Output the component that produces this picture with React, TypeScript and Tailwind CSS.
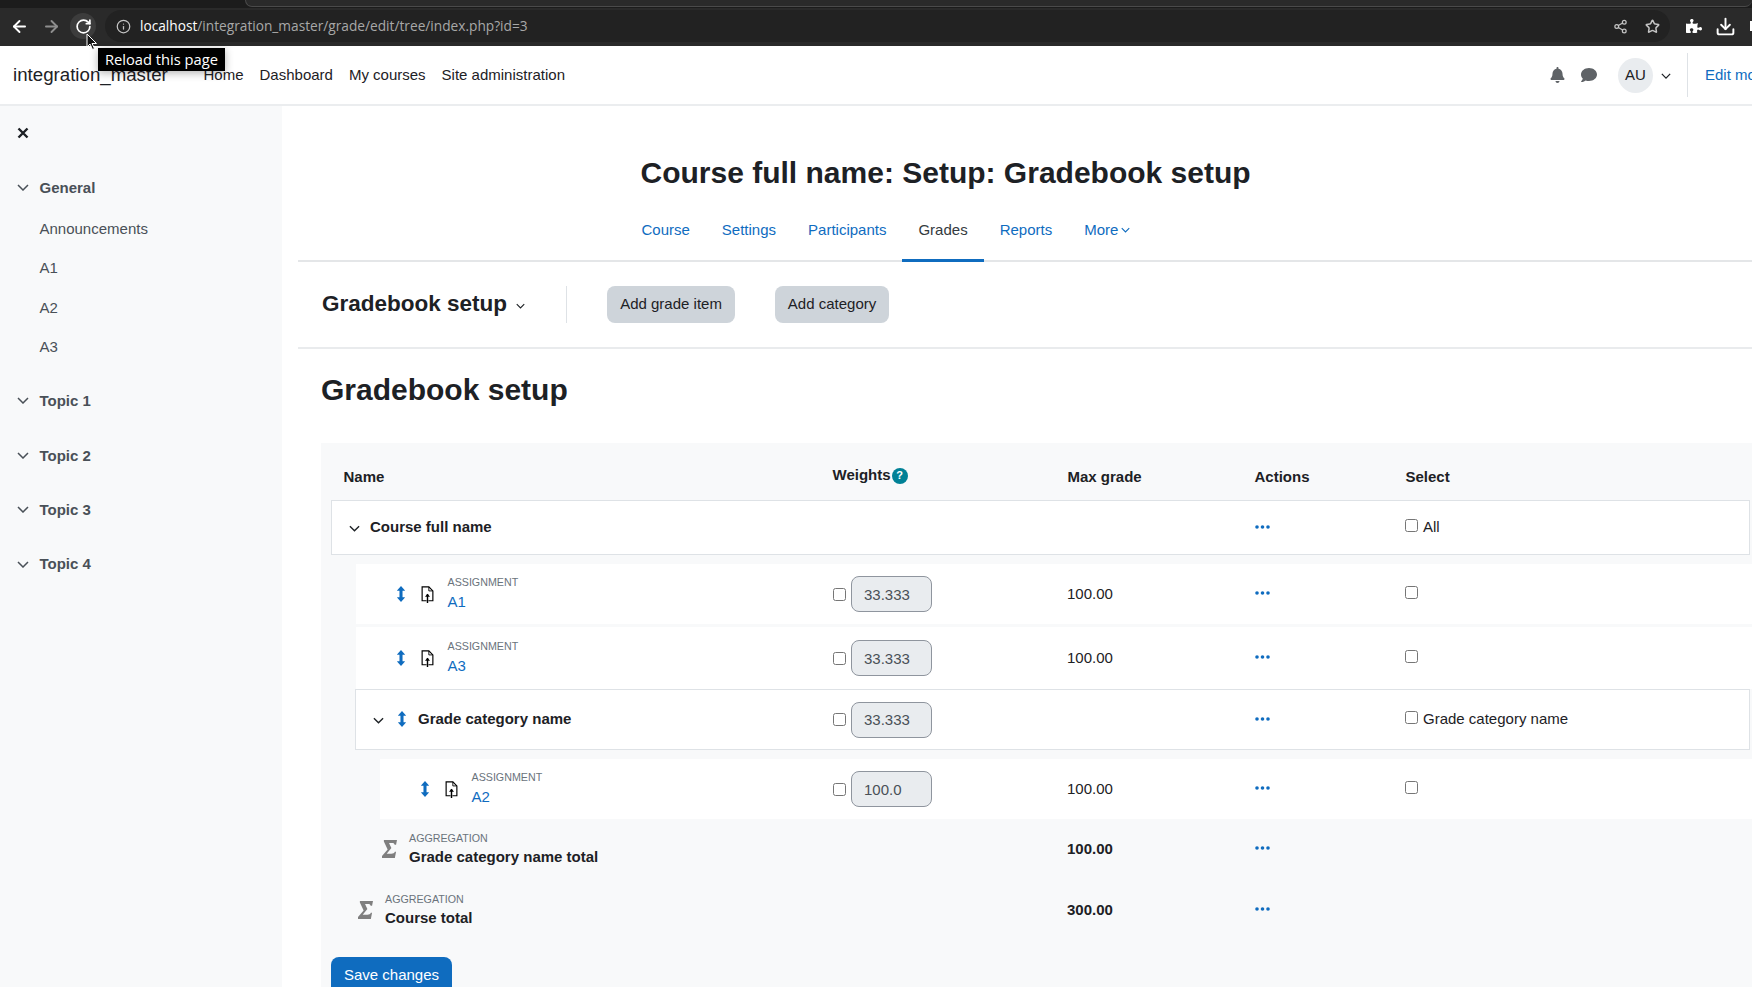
import type { ReactNode } from 'react'
import { ArrowLeft, ArrowRight, Download, Info, RotateCw, Share2, Star } from 'lucide-react'
import { FaBell, FaComment, FaPuzzlePiece } from 'react-icons/fa'

const courseNav = ['Home', 'Dashboard', 'My courses', 'Site administration']
const tabs = ['Course', 'Settings', 'Participants', 'Grades', 'Reports']

function Chevron({ className }: { className: string }) {
  return (
    <svg viewBox="0 0 12 7" className={className} fill="none" stroke="currentColor" strokeWidth="1.5">
      <path d="M1 1 L6 6 L11 1" />
    </svg>
  )
}

function MoveIcon() {
  return (
    <svg viewBox="0 0 11 20" className="w-[10px] h-[16px] -mt-[1px] text-[#0f6cbf] shrink-0" fill="currentColor">
      <path d="M5.5 0 L10.5 5.5 Q10.5 6 10 6 H7.4 V14 H10 Q10.5 14 10.5 14.5 L5.5 20 L0.5 14.5 Q0.5 14 1 14 H3.6 V6 H1 Q0.5 6 0.5 5.5 Z" />
    </svg>
  )
}

function FileIcon() {
  return (
    <svg viewBox="0 0 14 19" className="w-[13px] h-[17px] text-black shrink-0" fill="none" stroke="currentColor" strokeWidth="1.3">
      <path d="M6 16.5 H1 V1 H8.5 L13 5.5 V16.5 H8" />
      <path d="M8.5 1 V5.5 H13" strokeWidth="1" />
      <path d="M7 19 V9" strokeWidth="1.6" />
      <path d="M4.2 12 L7 8.6 L9.8 12 Z" fill="currentColor" stroke="none" />
    </svg>
  )
}

function SigmaIcon() {
  return (
    <svg viewBox="0 0 16 19" className="w-[15px] h-[18px] text-[#7f7f7f] shrink-0" fill="currentColor">
      <path d="M2 0 H16 L15 5 H13.5 C13.3 3.3 12 3 10.5 3 H7.5 L10 8.5 L5 14.5 H10 C12 14.5 13 14 13.7 12.5 H15 L13.7 19 H0 L0 17 L6 10 L2 1.5 Z" />
    </svg>
  )
}

function Dots() {
  return (
    <svg viewBox="0 0 15 4" className="w-[15px] h-[4px] text-[#0f6cbf]" fill="currentColor">
      <circle cx="2" cy="2" r="1.8" />
      <circle cx="7.5" cy="2" r="1.8" />
      <circle cx="13" cy="2" r="1.8" />
    </svg>
  )
}

function WeightBox({ value }: { value: string }) {
  return (
    <div className="flex items-center gap-[5px]">
      <input type="checkbox" className="w-[13px] h-[13px]" />
      <input
        readOnly
        value={value}
        className="w-[81px] h-[36px] rounded-lg border border-[#8f959e] bg-[#e9ecef] pl-3 text-[15px] text-[#495057] outline-none"
      />
    </div>
  )
}

function SelectBox({ label }: { label?: string }) {
  return (
    <div className="flex items-center gap-[5px]">
      <input type="checkbox" className="w-[13px] h-[13px] -mt-[4px]" />
      {label && <span>{label}</span>}
    </div>
  )
}

function TailCells({ max, bold, select }: { max?: string; bold?: boolean; select?: ReactNode }) {
  return (
    <>
      <div className={`w-[188px] shrink-0 ${bold ? 'font-bold' : ''}`}>{max}</div>
      <div className="w-[150px] shrink-0 -mt-[2px]">
        <Dots />
      </div>
      <div className="flex-1">{select}</div>
    </>
  )
}

function ItemRow({ name, weight, indent }: { name: string; weight: string; indent: boolean }) {
  return (
    <div className={`flex items-center h-full bg-white ${indent ? 'ml-[59px]' : 'ml-[35px]'}`}>
      <div className={`flex items-center shrink-0 pl-[40px] ${indent ? 'w-[453px]' : 'w-[477px]'}`}>
        <MoveIcon />
        <div className="ml-[14.5px]">
          <FileIcon />
        </div>
        <div className="ml-[14px] -mt-[2px]">
          <div className="text-[10.7px] leading-[14px] text-[#6a737b]">ASSIGNMENT</div>
          <div className="text-[15px] leading-[20px] mt-[3px] text-[#0f6cbf]">{name}</div>
        </div>
      </div>
      <div className="w-[234px] shrink-0">
        <WeightBox value={weight} />
      </div>
      <TailCells max="100.00" select={<SelectBox />} />
    </div>
  )
}

function TotalRow({ name, max, indent }: { name: string; max: string; indent: boolean }) {
  return (
    <div className={`flex items-center h-full ${indent ? 'ml-[61px]' : 'ml-[37px]'}`}>
      <div className={`flex items-center shrink-0 ${indent ? 'w-[685px]' : 'w-[709px]'}`}>
        <SigmaIcon />
        <div className="ml-[12px]">
          <div className="text-[10.7px] leading-[14px] text-[#6a737b]">AGGREGATION</div>
          <div className="text-[15px] leading-[20px] mt-[2px] font-bold">{name}</div>
        </div>
      </div>
      <TailCells max={max} bold />
    </div>
  )
}

export default function App() {
  return (
    <div className="relative w-[1752px] h-[987px] overflow-hidden bg-white text-[15px] text-[#1d2125] font-['Liberation_Sans',Arial,sans-serif]">
      {/* browser chrome */}
      <div className="h-[46px] bg-[#2a2a2a] flex flex-col">
        <div className="h-[8px] bg-[#1c1c1c] pl-[245px]">
          <div className="h-[7px] bg-[#2a2a2a] rounded-b-lg border-b border-l border-[#4a4a4a]" />
        </div>
        <div className="flex-1 flex items-center text-white pb-[2px]">
          <ArrowLeft className="ml-[10px] w-[19px] h-[19px] shrink-0" strokeWidth={2.4} />
          <ArrowRight className="ml-[13px] w-[19px] h-[19px] shrink-0 text-[#8e8e8e]" strokeWidth={2.4} />
          <div className="ml-[9px] w-[26px] h-[26px] shrink-0 rounded-full bg-[#3c3c3c] flex items-center justify-center">
            <RotateCw className="w-[17px] h-[17px]" strokeWidth={2.4} />
          </div>
          <div className="ml-[9px] w-[1565px] h-[32px] rounded-full bg-[#222222] flex items-center pl-[11px] pr-[9px] shrink-0">
            <Info className="w-[15px] h-[15px] text-[#c4c4c4]" />
            <div className="ml-[9px] text-[13.7px] font-['Open_Sans',sans-serif] text-[#a8a8a8]">
              <span className="text-white">localhost</span>/integration_master/grade/edit/tree/index.php?id=3
            </div>
            <Share2 className="ml-auto w-[15px] h-[15px] text-[#c4c4c4]" />
            <Star className="ml-[17px] mr-[1px] w-[15px] h-[15px] text-[#c4c4c4]" strokeWidth={2.4} />
          </div>
          <FaPuzzlePiece className="ml-[16px] w-[16px] h-[16px] shrink-0" />
          <Download className="ml-[13px] w-[21px] h-[21px] shrink-0" strokeWidth={2.2} />
          <div className="ml-[14px] w-[4px] h-[10px] bg-white shrink-0" />
        </div>
      </div>

      {/* site header */}
      <header className="h-[60px] flex items-center border-b-2 border-[#ebedef]">
        <div className="ml-[13px] w-[190.5px] text-[18.7px]">integration_master</div>
        <nav className="flex gap-4">
          {courseNav.map(item => (
            <span key={item}>{item}</span>
          ))}
        </nav>
        <div className="ml-auto flex items-center h-[44px]">
          <FaBell className="w-[15px] h-[16px] text-[#5f6367]" />
          <FaComment className="ml-[16px] w-[16px] h-[16px] text-[#5f6367]" />
          <div className="ml-[21px] w-[35px] h-[35px] rounded-full bg-[#e9ecef] flex items-center justify-center">AU</div>
          <Chevron className="ml-[8px] w-[10px] h-[6px] mt-[2px]" />
          <div className="ml-[16px] w-px h-[44px] bg-[#dee2e6]" />
          <div className="ml-[17px] w-[47px] overflow-hidden whitespace-nowrap text-[#0f6cbf]">Edit mode</div>
        </div>
      </header>

      <div className="flex h-[881px]">
        {/* course index */}
        <aside className="w-[282px] shrink-0 bg-[#f8f9fa] text-[#495057] pl-[17px] pt-[21px]">
          <svg viewBox="0 0 12 12" className="w-[12px] h-[12px] text-[#1d2125]" fill="none" stroke="currentColor" strokeWidth="2.4">
            <path d="M1.5 1.5 L10.5 10.5 M10.5 1.5 L1.5 10.5" />
          </svg>
          <div className="mt-[39px] flex items-center h-[20px]">
            <Chevron className="w-[12px] h-[7px] -mt-[1px]" />
            <span className="ml-[10.5px] font-bold">General</span>
          </div>
          <div className="ml-[22.5px] mt-[20.5px] flex flex-col gap-[19.5px] leading-[20px]">
            <span>Announcements</span>
            <span>A1</span>
            <span>A2</span>
            <span>A3</span>
          </div>
          {['Topic 1', 'Topic 2', 'Topic 3', 'Topic 4'].map(t => (
            <div key={t} className="flex items-center h-[20px] mt-[34.4px]">
              <Chevron className="w-[12px] h-[7px] -mt-[1px]" />
              <span className="ml-[10.5px] font-bold">{t}</span>
            </div>
          ))}
        </aside>

        <main className="flex-1 min-w-0 pl-4">
          <h2 className="mt-[47px] pl-[342.5px] text-[30px] leading-[40px] font-bold">
            Course full name: Setup: Gradebook setup
          </h2>

          {/* tabs */}
          <div className="mt-[21px] h-[48px] border-b-2 border-[#e4e6e8] flex pl-[327.5px]">
            {tabs.map(tab => (
              <div
                key={tab}
                className={`px-4 pt-[5px] h-[48px] ${
                  tab === 'Grades' ? 'border-b-[3px] border-[#0f6cbf] text-[#343a40]' : 'text-[#0f6cbf]'
                }`}
              >
                {tab}
              </div>
            ))}
            <div className="px-4 pt-[5px] flex items-start text-[#0f6cbf]">
              More
              <Chevron className="w-[9px] h-[6px] mt-[8px] ml-[3px]" />
            </div>
          </div>

          {/* tertiary nav */}
          <div className="h-[87px] border-b-2 border-[#e9ebed] flex items-center pl-6 pb-[1px]">
            <span className="text-[22.5px] font-bold">Gradebook setup</span>
            <Chevron className="ml-[9px] mt-[4px] w-[9px] h-[6px]" />
            <div className="ml-[41px] w-px h-[37px] bg-[#dee2e6]" />
            <button className="ml-10 h-[37px] w-[128px] rounded-lg bg-[#ced4da]">Add grade item</button>
            <button className="ml-10 h-[37px] w-[114px] rounded-lg bg-[#ced4da]">Add category</button>
          </div>

          <h2 className="mt-[21px] ml-[23px] text-[30px] leading-[40px] font-bold">Gradebook setup</h2>

          {/* grade tree */}
          <section className="mt-[33px] ml-[23px] bg-[#f8f9fa] h-[544px]">
            <div className="h-[57px] flex items-center font-bold pt-[11px]">
              <div className="w-[511.5px] pl-[22.5px] shrink-0">Name</div>
              <div className="w-[235px] shrink-0 flex items-center gap-px -mt-[3px]">
                Weights
                <span className="w-[16px] h-[16px] rounded-full bg-[#008196] text-white text-[11px] flex items-center justify-center">
                  ?
                </span>
              </div>
              <div className="w-[187px] shrink-0">Max grade</div>
              <div className="w-[151px] shrink-0">Actions</div>
              <div>Select</div>
            </div>

            <div className="h-[55px] ml-[10px] mr-[2px] bg-white border border-[#dee2e6] flex items-center">
              <div className="w-[501px] shrink-0 flex items-center font-bold">
                <Chevron className="ml-[17px] w-[11px] h-[7px] mt-[1px]" />
                <span className="ml-[10px]">Course full name</span>
              </div>
              <div className="w-[234px] shrink-0" />
              <TailCells select={<SelectBox label="All" />} />
            </div>

            <div className="h-[60px] mt-[9px]">
              <ItemRow name="A1" weight="33.333" indent={false} />
            </div>
            <div className="h-[62px] mt-[3px]">
              <ItemRow name="A3" weight="33.333" indent={false} />
            </div>

            <div className="h-[61px] ml-[34px] mr-[2px] bg-white border border-[#dee2e6] flex items-center">
              <div className="w-[477px] shrink-0 flex items-center font-bold">
                <Chevron className="ml-[16.5px] w-[11px] h-[7px] mt-[1px]" />
                <div className="ml-[13px]">
                  <MoveIcon />
                </div>
                <span className="ml-[11.5px]">Grade category name</span>
              </div>
              <div className="w-[234px] shrink-0">
                <WeightBox value="33.333" />
              </div>
              <TailCells select={<SelectBox label="Grade category name" />} />
            </div>

            <div className="h-[60px] mt-[9px]">
              <ItemRow name="A2" weight="100.0" indent />
            </div>

            <div className="h-[60px]">
              <TotalRow name="Grade category name total" max="100.00" indent />
            </div>
            <div className="h-[62px]">
              <TotalRow name="Course total" max="300.00" indent={false} />
            </div>

            <button className="mt-[16px] ml-[10px] h-[37px] w-[121px] rounded-lg bg-[#0f6cbf] text-white">
              Save changes
            </button>
          </section>
        </main>
      </div>

      {/* hover state captured in the screenshot */}
      <div className="absolute left-[98px] top-[48px] bg-black text-white px-[7px] h-[23px] flex items-center text-[14.7px] font-['Open_Sans',sans-serif] shadow-[0_2px_8px_rgba(0,0,0,0.3)]">
        Reload this page
      </div>
      <svg viewBox="0 0 12 18" className="absolute left-[86px] top-[33px] w-[12px] h-[18px]">
        <path d="M1 1 V14 L4 11 L6.5 16.5 L8.5 15.5 L6 10.5 H10.5 Z" fill="#111" stroke="#fff" strokeWidth="1" />
      </svg>
    </div>
  )
}
